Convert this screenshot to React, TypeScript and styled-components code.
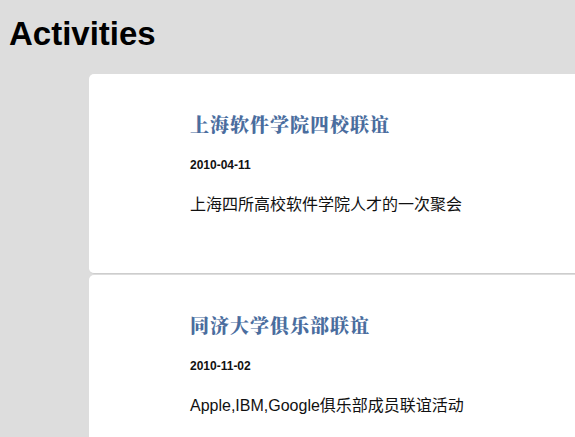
import React from "react";
import styled, { createGlobalStyle } from "styled-components";

const Global = createGlobalStyle`
  html, body {
    margin: 0;
    padding: 0;
    background: #dddddd;
    overflow-x: hidden;
  }
  body {
    font-family: "Liberation Sans", Arial, "Noto Sans CJK SC", sans-serif;
    color: #000;
  }
`;

const Page = styled.div`
  display: flex;
  flex-direction: column;
  padding-top: 16px;
`;

const Heading = styled.h1`
  margin: 0 0 22px 9px;
  font-family: "Liberation Sans", Arial, sans-serif;
  font-size: 33px;
  line-height: 36px;
  font-weight: bold;
  color: #000;
`;

const List = styled.div`
  display: flex;
  flex-direction: column;
  margin-left: 89px;
  margin-right: -10px;
`;

const Card = styled.article`
  display: flex;
  flex-direction: column;
  background: #ffffff;
  border-radius: 5px;
  border-bottom: 1px solid #cdcdcd;
  padding: 35px 0 58px 101px;
  margin-bottom: 1px;
`;

const Title = styled.h2`
  margin: 0;
  font-family: "Noto Serif CJK SC", "Noto Sans CJK SC", serif;
  font-size: 19px;
  line-height: 30px;
  font-weight: 900;
  letter-spacing: 1px;
  color: #4a6d9e;
`;

const DateText = styled.div`
  margin-top: 18px;
  font-family: "Liberation Sans", Arial, sans-serif;
  font-size: 12px;
  line-height: 16px;
  font-weight: bold;
  color: #111;
`;

const Desc = styled.p`
  margin: 22px 0 0 0;
  font-family: "Liberation Sans", Arial, "Noto Sans CJK SC", sans-serif;
  font-size: 16px;
  line-height: 20px;
  color: #111;
`;

const activities = [
  {
    title: "上海软件学院四校联谊",
    date: "2010-04-11",
    desc: "上海四所高校软件学院人才的一次聚会",
  },
  {
    title: "同济大学俱乐部联谊",
    date: "2010-11-02",
    desc: "Apple,IBM,Google俱乐部成员联谊活动",
  },
];

export default function App() {
  return (
    <>
      <Global />
      <Page>
        <Heading>Activities</Heading>
        <List>
          {activities.map((a) => (
            <Card key={a.date}>
              <Title>{a.title}</Title>
              <DateText>{a.date}</DateText>
              <Desc>{a.desc}</Desc>
            </Card>
          ))}
        </List>
      </Page>
    </>
  );
}
